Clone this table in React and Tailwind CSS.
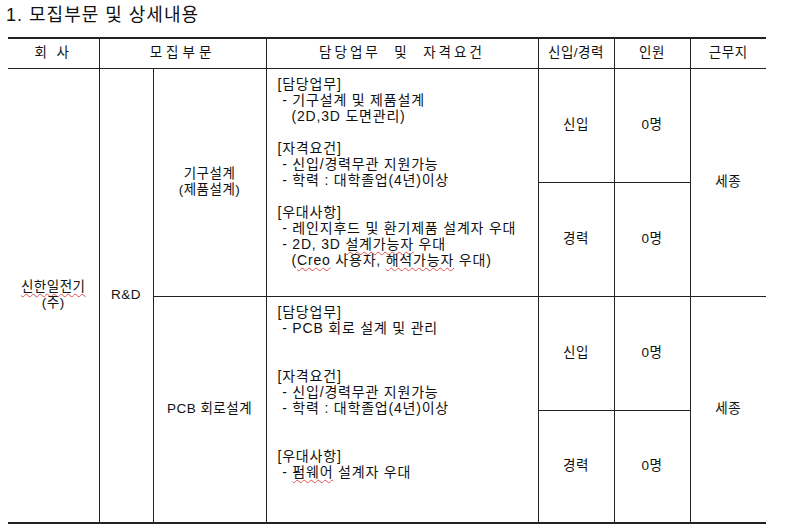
import React from "react";

const font = { fontFamily: '"Liberation Sans", "Noto Sans CJK KR", sans-serif' };

const Squiggle = ({ children }) => (
  <span className="underline decoration-wavy decoration-[#e05050] decoration-1 underline-offset-2">
    {children}
  </span>
);

const Detail = ({ lines }) => (
  <div className="pl-[11px] pt-[7px] text-left text-[14px] tracking-[0.8px] leading-[16px] whitespace-pre">
    {lines.map((l, i) => (
      <div key={i} className="h-[16px]">
        {l}
      </div>
    ))}
  </div>
);

const App = () => {
  const td = "border border-[#222] text-center align-middle";
  return (
    <div className="w-[800px] h-[530px] bg-white text-[#111] overflow-hidden" style={font}>
      <h1 className="pl-[6px] pt-[4px] text-[18px] leading-[22px] tracking-[1px]">
        1. 모집부문 및 상세내용
      </h1>
      <table className="ml-[8px] mt-[11px] border-collapse table-fixed text-[13.5px] tracking-[0.5px] border-t-2 border-b-2 border-[#222]">
        <colgroup>
          <col className="w-[91px]" />
          <col className="w-[54px]" />
          <col className="w-[113px]" />
          <col className="w-[272px]" />
          <col className="w-[76px]" />
          <col className="w-[76px]" />
          <col className="w-[76px]" />
        </colgroup>
        <thead>
          <tr className="h-[30px]">
            <th className={`${td} border-l-0 font-normal tracking-[3px]`}>회 사</th>
            <th colSpan={2} className={`${td} font-normal tracking-[4px]`}>모집부문</th>
            <th className={`${td} font-normal tracking-[3px] whitespace-pre`}>담당업무  및  자격요건</th>
            <th className={`${td} font-normal`}>신입/경력</th>
            <th className={`${td} font-normal`}>인원</th>
            <th className={`${td} border-r-0 font-normal`}>근무지</th>
          </tr>
        </thead>
        <tbody>
          <tr className="h-[114px]">
            <td rowSpan={4} className={`${td} border-l-0 leading-[16px]`}>
              <Squiggle>신한일전기</Squiggle>
              <br />
              (주)
            </td>
            <td rowSpan={4} className={td}>R&amp;D</td>
            <td rowSpan={2} className={`${td} leading-[16px]`}>
              기구설계
              <br />
              (제품설계)
            </td>
            <td rowSpan={2} className={`${td} align-top`}>
              <Detail
                lines={[
                  "[담당업무]",
                  " - 기구설계 및 제품설계",
                  "   (2D,3D 도면관리)",
                  "",
                  "[자격요건]",
                  " - 신입/경력무관 지원가능",
                  " - 학력 : 대학졸업(4년)이상",
                  "",
                  "[우대사항]",
                  " - 레인지후드 및 환기제품 설계자 우대",
                  <> - 2D, 3D <Squiggle>설계가능자</Squiggle> 우대</>,
                  <>   (<Squiggle>Creo</Squiggle> 사용자, <Squiggle>해석가능자</Squiggle> 우대)</>,
                ]}
              />
            </td>
            <td className={td}>신입</td>
            <td className={td}>0명</td>
            <td rowSpan={2} className={`${td} border-r-0`}>세종</td>
          </tr>
          <tr className="h-[114px]">
            <td className={td}>경력</td>
            <td className={td}>0명</td>
          </tr>
          <tr className="h-[114px]">
            <td rowSpan={2} className={td}>PCB 회로설계</td>
            <td rowSpan={2} className={`${td} align-top`}>
              <Detail
                lines={[
                  "[담당업무]",
                  " - PCB 회로 설계 및 관리",
                  "",
                  "",
                  "[자격요건]",
                  " - 신입/경력무관 지원가능",
                  " - 학력 : 대학졸업(4년)이상",
                  "",
                  "",
                  "[우대사항]",
                  <> - <Squiggle>펌웨어</Squiggle> 설계자 우대</>,
                ]}
              />
            </td>
            <td className={td}>신입</td>
            <td className={td}>0명</td>
            <td rowSpan={2} className={`${td} border-r-0`}>세종</td>
          </tr>
          <tr className="h-[113px]">
            <td className={td}>경력</td>
            <td className={td}>0명</td>
          </tr>
        </tbody>
      </table>
    </div>
  );
};

export default App;
